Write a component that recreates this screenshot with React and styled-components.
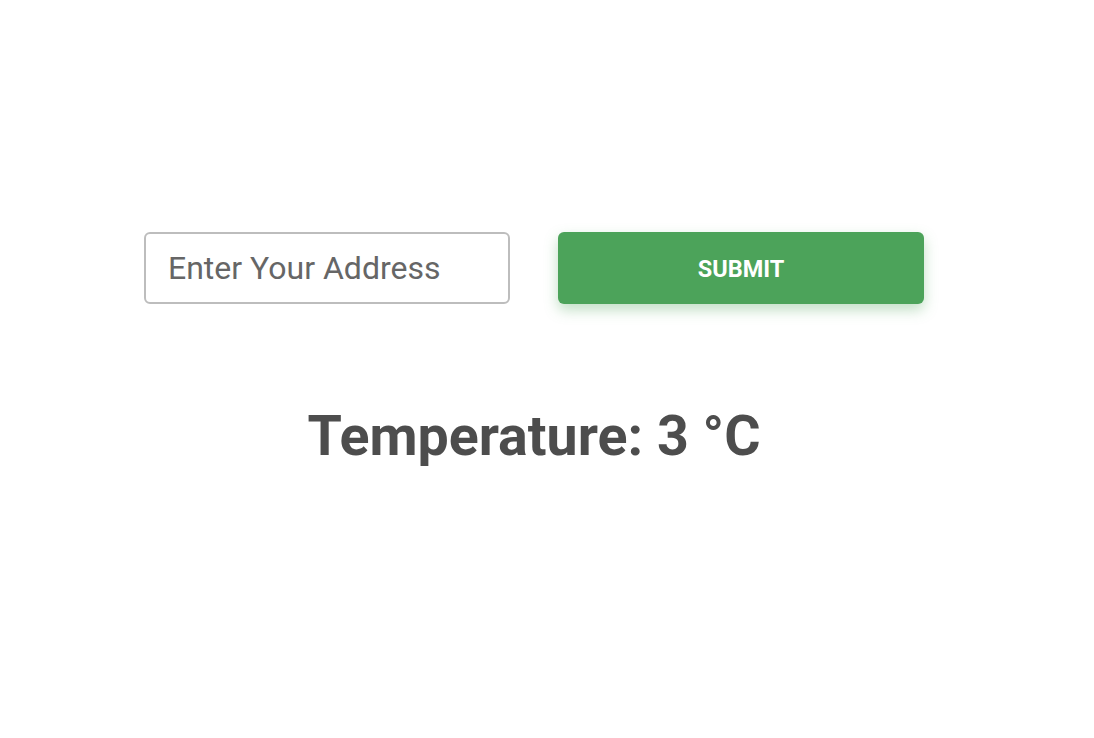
import React, { useState } from 'react';
import styled, { createGlobalStyle } from 'styled-components';

const GlobalStyle = createGlobalStyle`
  body {
    margin: 0;
    background: #ffffff;
    font-family: Roboto, "Liberation Sans", sans-serif;
  }
`;

const Page = styled.div`
  width: 1068px;
  padding-top: 232px;
  display: flex;
  flex-direction: column;
  align-items: center;
`;

const Form = styled.form`
  display: flex;
  gap: 48px;
`;

const Input = styled.input`
  box-sizing: border-box;
  width: 366px;
  height: 72px;
  padding: 0 22px;
  border: 2px solid #bdbdbd;
  border-radius: 6px;
  font-family: Roboto, "Liberation Sans", sans-serif;
  font-size: 32px;
  color: #444;
  outline: none;

  &::placeholder {
    color: #666666;
  }
`;

const Button = styled.button`
  width: 366px;
  height: 72px;
  padding-top: 2px;
  border: none;
  border-radius: 6px;
  background-color: #4ca35a;
  color: #ffffff;
  font-family: Roboto, "Liberation Sans", sans-serif;
  font-size: 23.5px;
  font-weight: 700;
  text-transform: uppercase;
  cursor: pointer;
  box-shadow: 0 6px 14px rgba(76, 163, 90, 0.35);
`;

const Temperature = styled.h1`
  margin: 100px 0 0;
  font-size: 55.5px;
  font-weight: 700;
  color: #4d4d4d;
`;

const App = () => {
  const [address, setAddress] = useState('');

  return (
    <>
      <GlobalStyle />
      <Page>
        <Form onSubmit={(e) => e.preventDefault()}>
          <Input
            placeholder="Enter Your Address"
            value={address}
            onChange={(e) => setAddress(e.target.value)}
          />
          <Button type="submit">Submit</Button>
        </Form>
        <Temperature>Temperature: 3 °C</Temperature>
      </Page>
    </>
  );
};

export default App;
